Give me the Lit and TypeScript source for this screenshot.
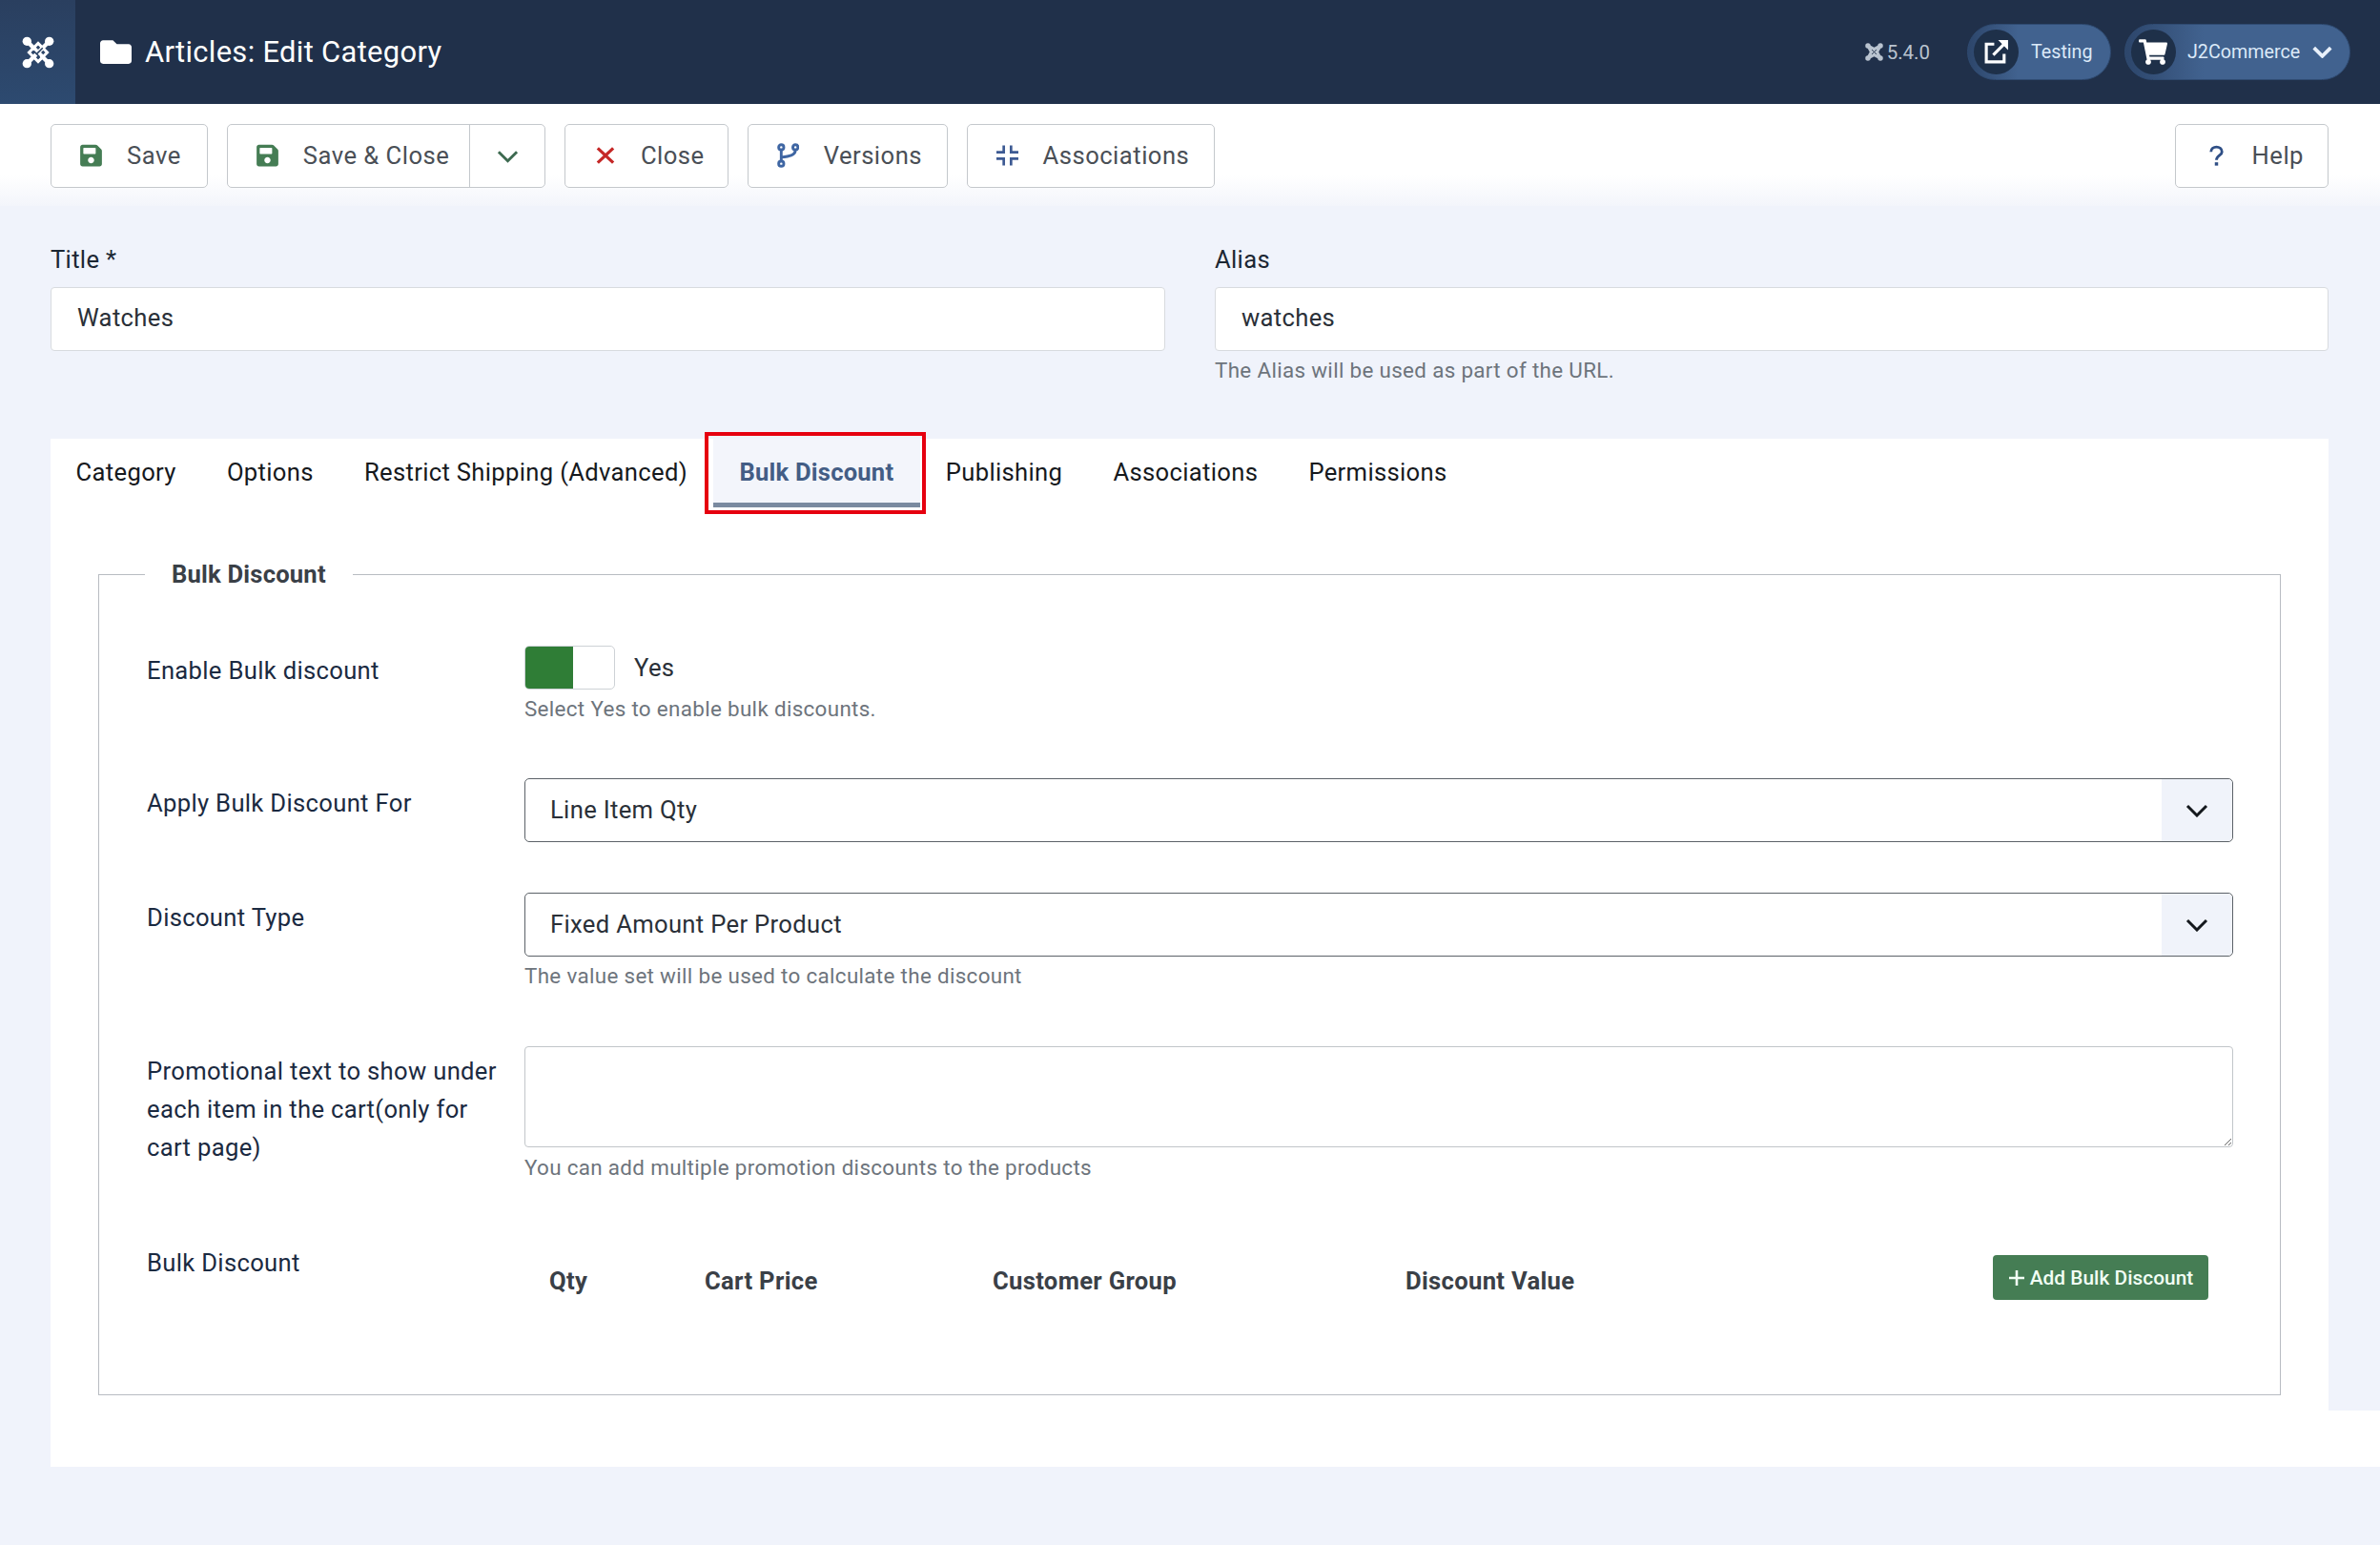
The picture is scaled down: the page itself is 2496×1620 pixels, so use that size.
import { LitElement, html, css, svg } from "lit";
import { customElement } from "lit/decorators.js";

const joomla = svg`<svg class="jm" viewBox="0 0 32 32"><g fill="none" stroke="currentColor" stroke-width="4" stroke-linecap="round"><path d="M5 5 L27 27"/><path d="M27 5 L5 27"/></g><g fill="currentColor"><circle cx="5" cy="5" r="4.4"/><circle cx="27" cy="5" r="4.4"/><circle cx="5" cy="27" r="4.4"/><circle cx="27" cy="27" r="4.4"/></g><g fill="none" stroke="currentColor" stroke-width="2.8"><path d="M10 13 L16 7 L25 16 L16 25 L7 16 L13 10"/></g><path d="M11.5 14.5 L17.5 20.5 M20.5 11.5 L14.5 17.5" fill="none" stroke="#2b4465" stroke-width="1.5"/></svg>`;
const joomlaSmall = svg`<svg class="jm" viewBox="0 0 32 32"><g fill="currentColor"><circle cx="5" cy="5" r="4.6"/><circle cx="27" cy="5" r="4.6"/><circle cx="5" cy="27" r="4.6"/><circle cx="27" cy="27" r="4.6"/><path d="M5 2 L16 8 L27 2 L30 5 L24 16 L30 27 L27 30 L16 24 L5 30 L2 27 L8 16 L2 5 Z"/></g><path d="M12 12 L20 20 M20 12 L12 20" fill="none" stroke="#20304a" stroke-width="1.6"/></svg>`;
const floppy = svg`<svg class="ico" viewBox="0 0 448 512"><path fill="#457d54" d="M433.941 129.941l-83.882-83.882A48 48 0 0 0 316.118 32H48C21.49 32 0 53.49 0 80v352c0 26.51 21.49 48 48 48h352c26.51 0 48-21.49 48-48V163.882a48 48 0 0 0-14.059-33.941zM224 416c-35.346 0-64-28.654-64-64 0-35.346 28.654-64 64-64s64 28.654 64 64c0 35.346-28.654 64-64 64zm96-304.52V212c0 6.627-5.373 12-12 12H76c-6.627 0-12-5.373-12-12V108c0-6.627 5.373-12 12-12h228.52c3.183 0 6.235 1.264 8.485 3.515l3.48 3.48A11.996 11.996 0 0 1 320 111.48z"/></svg>`;
const times = svg`<svg class="ico" viewBox="0 0 24 26"><path d="M4 5 L21 21 M21 5 L4 21" fill="none" stroke="#c52827" stroke-width="3.4"/></svg>`;
const branch = svg`<svg class="ico" viewBox="0 0 24 26"><g fill="none" stroke="#3f66a3" stroke-width="3"><circle cx="4.5" cy="4" r="2.8"/><circle cx="20" cy="4" r="2.8"/><circle cx="4.5" cy="22" r="2.8"/><path d="M4.5 7 V19"/><path d="M20 7 C20 13 13 14 4.5 15"/></g></svg>`;
const compress = svg`<svg class="ico" viewBox="0 0 24 24"><g fill="none" stroke="#3d5a93" stroke-width="2.8"><path d="M8 1 V8.5 H0"/><path d="M16 1 V8.5 H24"/><path d="M0 15.5 H8 V23"/><path d="M24 15.5 H16 V23"/></g></svg>`;
const question = svg`<svg class="ico" viewBox="0 0 24 24"><path d="M6 8 C6 1 18 1 18 8 C18 12 12 12 12 17" fill="none" stroke="#2f4f86" stroke-width="3"/><rect x="10.2" y="19.5" width="3.6" height="3.6" fill="#2f4f86"/></svg>`;
const chev = svg`<svg class="chev" viewBox="0 0 24 14"><path d="M2 2 L12 12 L22 2" fill="none" stroke="currentColor" stroke-width="3"/></svg>`;
const folder = svg`<svg class="folder" viewBox="0 0 512 512"><path fill="#fff" d="M464 128H272l-64-64H48C21.49 64 0 85.49 0 112v288c0 26.51 21.49 48 48 48h416c26.51 0 48-21.49 48-48V176c0-26.51-21.49-48-48-48z"/></svg>`;
const ext = svg`<svg class="ext" viewBox="0 0 26 26"><g fill="none" stroke="#fff" stroke-width="3"><path d="M11 5 H3 V23 H21 V15"/><path d="M10 16 L23 3"/></g><path d="M15 1 H25 V11 Z" fill="#fff"/></svg>`;
const cart = svg`<svg class="cart" viewBox="0 0 576 512"><path fill="#fff" d="M528.12 301.319l47.273-208C578.806 78.301 567.391 64 551.99 64H159.208l-9.166-44.81C147.758 8.021 137.93 0 126.529 0H24C10.745 0 0 10.745 0 24v16c0 13.255 10.745 24 24 24h69.883l70.248 343.435C147.325 417.1 136 435.222 136 456c0 30.928 25.072 56 56 56s56-25.072 56-56c0-15.674-6.447-29.835-16.824-40h209.647C430.447 426.165 424 440.326 424 456c0 30.928 25.072 56 56 56s56-25.072 56-56c0-22.172-12.888-41.332-31.579-50.405l5.517-24.276c3.413-15.018-8.002-29.319-23.403-29.319H218.117l-6.545-32h293.145c11.206 0 20.92-7.754 23.403-18.681z"/></svg>`;

@customElement("app-root")
export class AppRoot extends LitElement {
  static styles = css`
    :host { display: block; width: 2496px; min-height: 1620px; background: #f0f3fb; font-family: Roboto, "Liberation Sans", sans-serif; font-size: 25.6px; letter-spacing: 0.33px; color: #1c2733; }
    * { box-sizing: border-box; }
    .top { height: 109px; background: #20304a; display: flex; align-items: center; color: #fff; }
    .logo { width: 79px; height: 109px; background: linear-gradient(180deg, #2a3f5f, #2d4a70); display: flex; align-items: center; justify-content: center; color: #fff; }
    .jm { width: 34px; height: 34px; display: block; }
    .folder { width: 33px; height: 33px; margin-left: 26px; display: block; }
    .title { margin-left: 14px; font-size: 30.9px; line-height: 40px; }
    .right { margin-left: auto; display: flex; align-items: center; padding-right: 31px; letter-spacing: 0; }
    .ver { display: flex; align-items: center; gap: 4px; font-size: 20.5px; color: #b9c3cf; margin-right: 39px; }
    .ver .jm { width: 19px; height: 19px; }
    .pill { height: 59px; border-radius: 30px; background: linear-gradient(90deg, #2d466b, #41628f 35%, #41628f); display: flex; align-items: center; padding-left: 6px; color: #dbe9f8; font-size: 19.7px; border: 1px solid #2f4b72; }
    .pill + .pill { margin-left: 14px; }
    .circle { width: 47px; height: 47px; border-radius: 50%; background: #1e3049; display: flex; align-items: center; justify-content: center; flex: none; }
    .ext { width: 27px; height: 27px; display: block; }
    .cart { width: 30px; height: 27px; display: block; margin-left: -2px; }
    .p1 .lbl { margin-left: 13px; }
    .p2 .lbl { margin-left: 12px; }
    .p1 { width: 151px; }
    .p2 { width: 237px; }
    .p2 .chev { width: 21px; height: 13px; margin-left: 13px; color: #e8f0fa; }
    .p2 .chev path { stroke-width: 4.2; }

    .bar { height: 107px; background: linear-gradient(180deg, #ffffff 70%, #f3f5fb 100%); padding: 21px 54px 19px 53px; display: flex; gap: 20px; letter-spacing: 0.5px; }
    .btn { height: 67px; background: #fff; border: 1px solid #c4c8cc; border-radius: 5px; display: flex; align-items: center; padding: 0 25.5px 2px 30px; color: #4a4f56; }
    .btn .slot { width: 49px; flex: none; display: flex; align-items: center; }
    .ico { width: 23px; height: 26px; display: block; }
    .save { padding-right: 27px; }
    .close { padding-right: 24px; }
    .split { padding-right: 0; padding-bottom: 0; }
    .split .slot, .split .txtl { margin-bottom: 2px; }
    .split .drop { margin-left: 21px; width: 78.5px; height: 100%; border-left: 1px solid #c4c8cc; display: flex; align-items: center; justify-content: center; color: #3d6a50; }
    .drop .chev { width: 23px; height: 14px; }
    .help { margin-left: auto; padding-left: 31px; padding-right: 25px; }

    .main { padding: 0 54px 0 53px; }
    .head { display: grid; grid-template-columns: 1169px 1168px; column-gap: 52px; padding-top: 36px; height: 244px; }
    .lab { line-height: 40px; height: 49px; }
    .txt { display: block; width: 100%; height: 67px; border: 1px solid #d8dbdf; border-radius: 4px; background: #fff; padding: 0 27px 3px; font: inherit; letter-spacing: inherit; color: #2a3038; outline: none; }
    .hint { font-size: 22.4px; line-height: 32px; color: #6d747c; }
    .head .hint { margin-top: 4px; }

    .panel { background: #fff; display: flow-root; }
    .tabs { display: flex; height: 72px; padding-left: 0; }
    .tab { padding: 0 26.6px; line-height: 70px; color: #16191d; white-space: nowrap; }
    .tab.on { position: relative; font-weight: 700; color: #435d85; background: #f3f5fb; border-bottom: 5px solid #7a8aa0; height: 72px; padding: 0 28px; letter-spacing: 0.2px; }
    .tab.on::after { content: ""; position: absolute; left: -9px; right: -6px; top: -7px; bottom: -12px; border: 4px solid #e6000f; }
    fieldset { margin: 50px 50px 16px 50px; padding: 55px 49px 0 50px; border: 1px solid #b8bcc2; height: 881px; min-width: 0; }
    legend { margin-left: -2px; padding: 0 28px; font-weight: 700; line-height: 40px; color: #3a4047; letter-spacing: 0.2px; }
    .row { display: grid; grid-template-columns: 396px 1792px; }
    .rl { line-height: 40px; color: #1b2a41; padding: 6px 15px 0 0; }
    .r1 { margin-bottom: 57px; }
    .r2 { margin-bottom: 53px; }
    .r3 { margin-bottom: 58px; }
    .r4 { margin-bottom: 64px; }
    .tog { display: flex; align-items: center; gap: 20px; color: #2a3038; margin-bottom: 4px; }
    .sw { width: 95px; height: 46px; border: 1px solid #ced2d6; border-radius: 5px; background: #fff; overflow: hidden; }
    .sw i { display: block; width: 50px; height: 100%; background: #2f7d36; }
    .sel { height: 67px; border: 1px solid #5c6268; border-radius: 5px; background: #fff; display: flex; align-items: center; justify-content: space-between; padding-left: 26px; color: #2a3038; }
    .sel > span:first-child { margin-bottom: 2px; }
    .caret { width: 74px; height: 100%; background: #f0f3fa; display: flex; align-items: center; justify-content: center; color: #14181d; border-radius: 0 5px 5px 0; }
    .caret .chev { width: 24px; height: 14px; }
    .sel + .hint { margin-top: 4px; }
    textarea { display: block; width: 100%; height: 106px; border: 1px solid #c2c6ca; border-radius: 4px; background: #fff; outline: none; margin: 0; padding: 10px; }
    textarea + .hint { margin-top: 5px; }
    .last .rl { padding-top: 0; }
    .tbl { display: grid; grid-template-columns: 163px 302px 433px 1fr auto; padding: 12px 26px 0 26px; font-weight: 700; color: #3a4047; align-items: start; }
    .tbl span { line-height: 40px; padding-top: 7px; }
    .add { height: 47px; width: 226px; background: #457d54; color: #f2fff5; border-radius: 4px; border: none; font: 500 20.8px Roboto, sans-serif; letter-spacing: 0.05px; display: flex; align-items: center; justify-content: center; gap: 5px; padding: 0; }
    .plus { width: 18px; height: 18px; display: block; }
    .foot { height: 59px; background: #fff; margin-right: -54px; }
  `;

  private btn(icon: unknown, label: string, cls = "") {
    return html`<div class="btn ${cls}"><span class="slot">${icon}</span><span>${label}</span></div>`;
  }

  render() {
    return html`
      <header class="top">
        <div class="logo">${joomla}</div>
        ${folder}
        <div class="title">Articles: Edit Category</div>
        <div class="right">
          <div class="ver">${joomlaSmall}<span>5.4.0</span></div>
          <div class="pill p1"><span class="circle">${ext}</span><span class="lbl">Testing</span></div>
          <div class="pill p2"><span class="circle">${cart}</span><span class="lbl">J2Commerce</span>${chev}</div>
        </div>
      </header>
      <nav class="bar">
        ${this.btn(floppy, "Save", "save")}
        <div class="btn split"><span class="slot">${floppy}</span><span class="txtl">Save &amp; Close</span><span class="drop">${chev}</span></div>
        ${this.btn(times, "Close", "close")}
        ${this.btn(branch, "Versions")}
        ${this.btn(compress, "Associations")}
        ${this.btn(question, "Help", "help")}
      </nav>
      <main class="main">
        <section class="head">
          <div><div class="lab">Title *</div><input class="txt" value="Watches" /></div>
          <div><div class="lab">Alias</div><input class="txt" value="watches" /><div class="hint">The Alias will be used as part of the URL.</div></div>
        </section>
        <section class="panel">
          <div class="tabs">
            <div class="tab">Category</div>
            <div class="tab">Options</div>
            <div class="tab">Restrict Shipping (Advanced)</div>
            <div class="tab on">Bulk Discount</div>
            <div class="tab">Publishing</div>
            <div class="tab">Associations</div>
            <div class="tab">Permissions</div>
          </div>
          <fieldset>
            <legend>Bulk Discount</legend>
            <div class="row r1">
              <div class="rl">Enable Bulk discount</div>
              <div>
                <div class="tog"><div class="sw"><i></i></div><span>Yes</span></div>
                <div class="hint">Select Yes to enable bulk discounts.</div>
              </div>
            </div>
            <div class="row r2">
              <div class="rl">Apply Bulk Discount For</div>
              <div class="sel"><span>Line Item Qty</span><span class="caret">${chev}</span></div>
            </div>
            <div class="row r3">
              <div class="rl">Discount Type</div>
              <div>
                <div class="sel"><span>Fixed Amount Per Product</span><span class="caret">${chev}</span></div>
                <div class="hint">The value set will be used to calculate the discount</div>
              </div>
            </div>
            <div class="row r4">
              <div class="rl">Promotional text to show under each item in the cart(only for cart page)</div>
              <div>
                <textarea></textarea>
                <div class="hint">You can add multiple promotion discounts to the products</div>
              </div>
            </div>
            <div class="row last">
              <div class="rl">Bulk Discount</div>
              <div class="tbl">
                <span>Qty</span><span>Cart Price</span><span>Customer Group</span><span>Discount Value</span>
                <button class="add"><svg class="plus" viewBox="0 0 18 18"><path d="M9 1 V17 M1 9 H17" stroke="#f2fff5" stroke-width="2.6" fill="none"/></svg>Add Bulk Discount</button>
              </div>
            </div>
          </fieldset>
        </section>
        <div class="foot"></div>
      </main>
    `;
  }
}
